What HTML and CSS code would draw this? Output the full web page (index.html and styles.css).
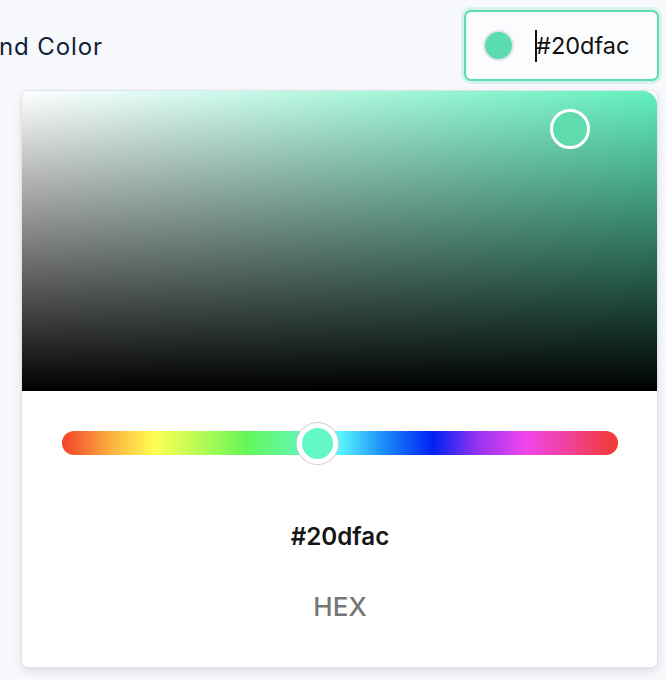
FILE: index.html
```html
<!DOCTYPE html>
<html lang="en">
<head>
<meta charset="utf-8">
<title>Color picker</title>
<link rel="stylesheet" href="styles.css">
</head>
<body>
<div class="page">
  <div class="field-row">
    <div class="label-clip"><span class="label">Background Color</span></div>
    <div class="color-input">
      <span class="swatch"></span>
      <span class="value"><span class="caret"></span>#20dfac</span>
    </div>
  </div>
  <div class="picker">
    <div class="saturation">
      <span class="sat-thumb"></span>
    </div>
    <div class="hue-wrap">
      <div class="hue">
        <span class="hue-thumb" style="left: 45.8%"></span>
      </div>
    </div>
    <div class="hex-value">#20dfac</div>
    <div class="hex-label">HEX</div>
  </div>
</div>
</body>
</html>
```
FILE: styles.css
```css
* { box-sizing: border-box; }
html, body {
  margin: 0;
  padding: 0;
  background: #f8f9fc;
  font-family: Inter, "Noto Sans", sans-serif;
}
.page {
  width: 666px;
  height: 680px;
  overflow: hidden;
}
.field-row {
  display: flex;
  justify-content: space-between;
  align-items: center;
  height: 90px;
  padding: 0 7px 0 0;
}
.label-clip {
  width: 103px;
  overflow: hidden;
  display: flex;
  justify-content: flex-end;
  margin-top: 2px;
}
.label {
  flex: none;
  white-space: nowrap;
  font-size: 24px;
  color: #12213a;
  letter-spacing: 0.9px;
}
.color-input {
  width: 195px;
  height: 71px;
  margin-top: 1px;
  border: 2px solid #5edcb2;
  border-radius: 7px;
  box-shadow: 0 0 0 3px rgba(94, 220, 178, 0.22);
  background: #fbfcfd;
  display: flex;
  align-items: center;
  padding-left: 17px;
}
.swatch {
  width: 31px;
  height: 31px;
  border-radius: 50%;
  background: #5adbb0;
  border: 2px solid #e1e3ea;
  flex: none;
}
.value {
  margin-left: 21px;
  font-size: 23.5px;
  color: #111;
  display: flex;
  align-items: center;
  letter-spacing: 0;
}
.caret {
  display: inline-block;
  width: 2px;
  height: 32px;
  background: #111;
  margin-right: -1px;
}
.picker {
  margin-left: 21px;
  width: 637px;
  height: 578px;
  background: #fff;
  border: 1px solid #dfe2ee;
  border-radius: 7px;
  box-shadow: 0 4px 10px rgba(40, 50, 90, 0.12);
  display: flex;
  flex-direction: column;
  overflow: hidden;
}
.saturation {
  position: relative;
  height: 300px;
  border-radius: 6px 14px 0 0;
  background:
    linear-gradient(to top, #000 0%, rgba(0,0,0,0) 100%),
    linear-gradient(to right, #fff 0%, #62f0bf 100%);
}
.sat-thumb {
  position: absolute;
  left: 528px;
  top: 18px;
  width: 40px;
  height: 40px;
  border-radius: 50%;
  border: 3px solid #fff;
  background: #5edcae;
}
.hue-wrap {
  padding: 40px 39px 0 40px;
}
.hue {
  position: relative;
  height: 24px;
  border-radius: 12px;
  background: linear-gradient(to right,
    #f4412a 0%,
    #fcb240 9%,
    #ffff55 16.7%,
    #b4fb55 25%,
    #63f757 33.3%,
    #63f7a8 41.6%,
    #58f6ff 50%,
    #1a8af8 58%,
    #0022f5 66.7%,
    #9a33f0 75%,
    #ef45ec 83.3%,
    #f0429a 91%,
    #f23a30 100%);
}
.hue-thumb {
  position: absolute;
  top: 50%;
  width: 41px;
  height: 41px;
  margin-left: -20px;
  margin-top: -20.5px;
  border-radius: 50%;
  background: #64f8c4;
  border: 5px solid #fff;
  box-shadow: 0 0 0 1px #cfcfd3;
}
.hex-value {
  margin-top: 67px;
  text-align: center;
  font-size: 24.2px;
  font-weight: 600;
  color: #161616;
  padding-left: 1px;
}
.hex-label {
  margin-top: 40px;
  text-align: center;
  font-size: 26px;
  font-weight: 500;
  color: #767676;
  padding-left: 1px;
}
```
